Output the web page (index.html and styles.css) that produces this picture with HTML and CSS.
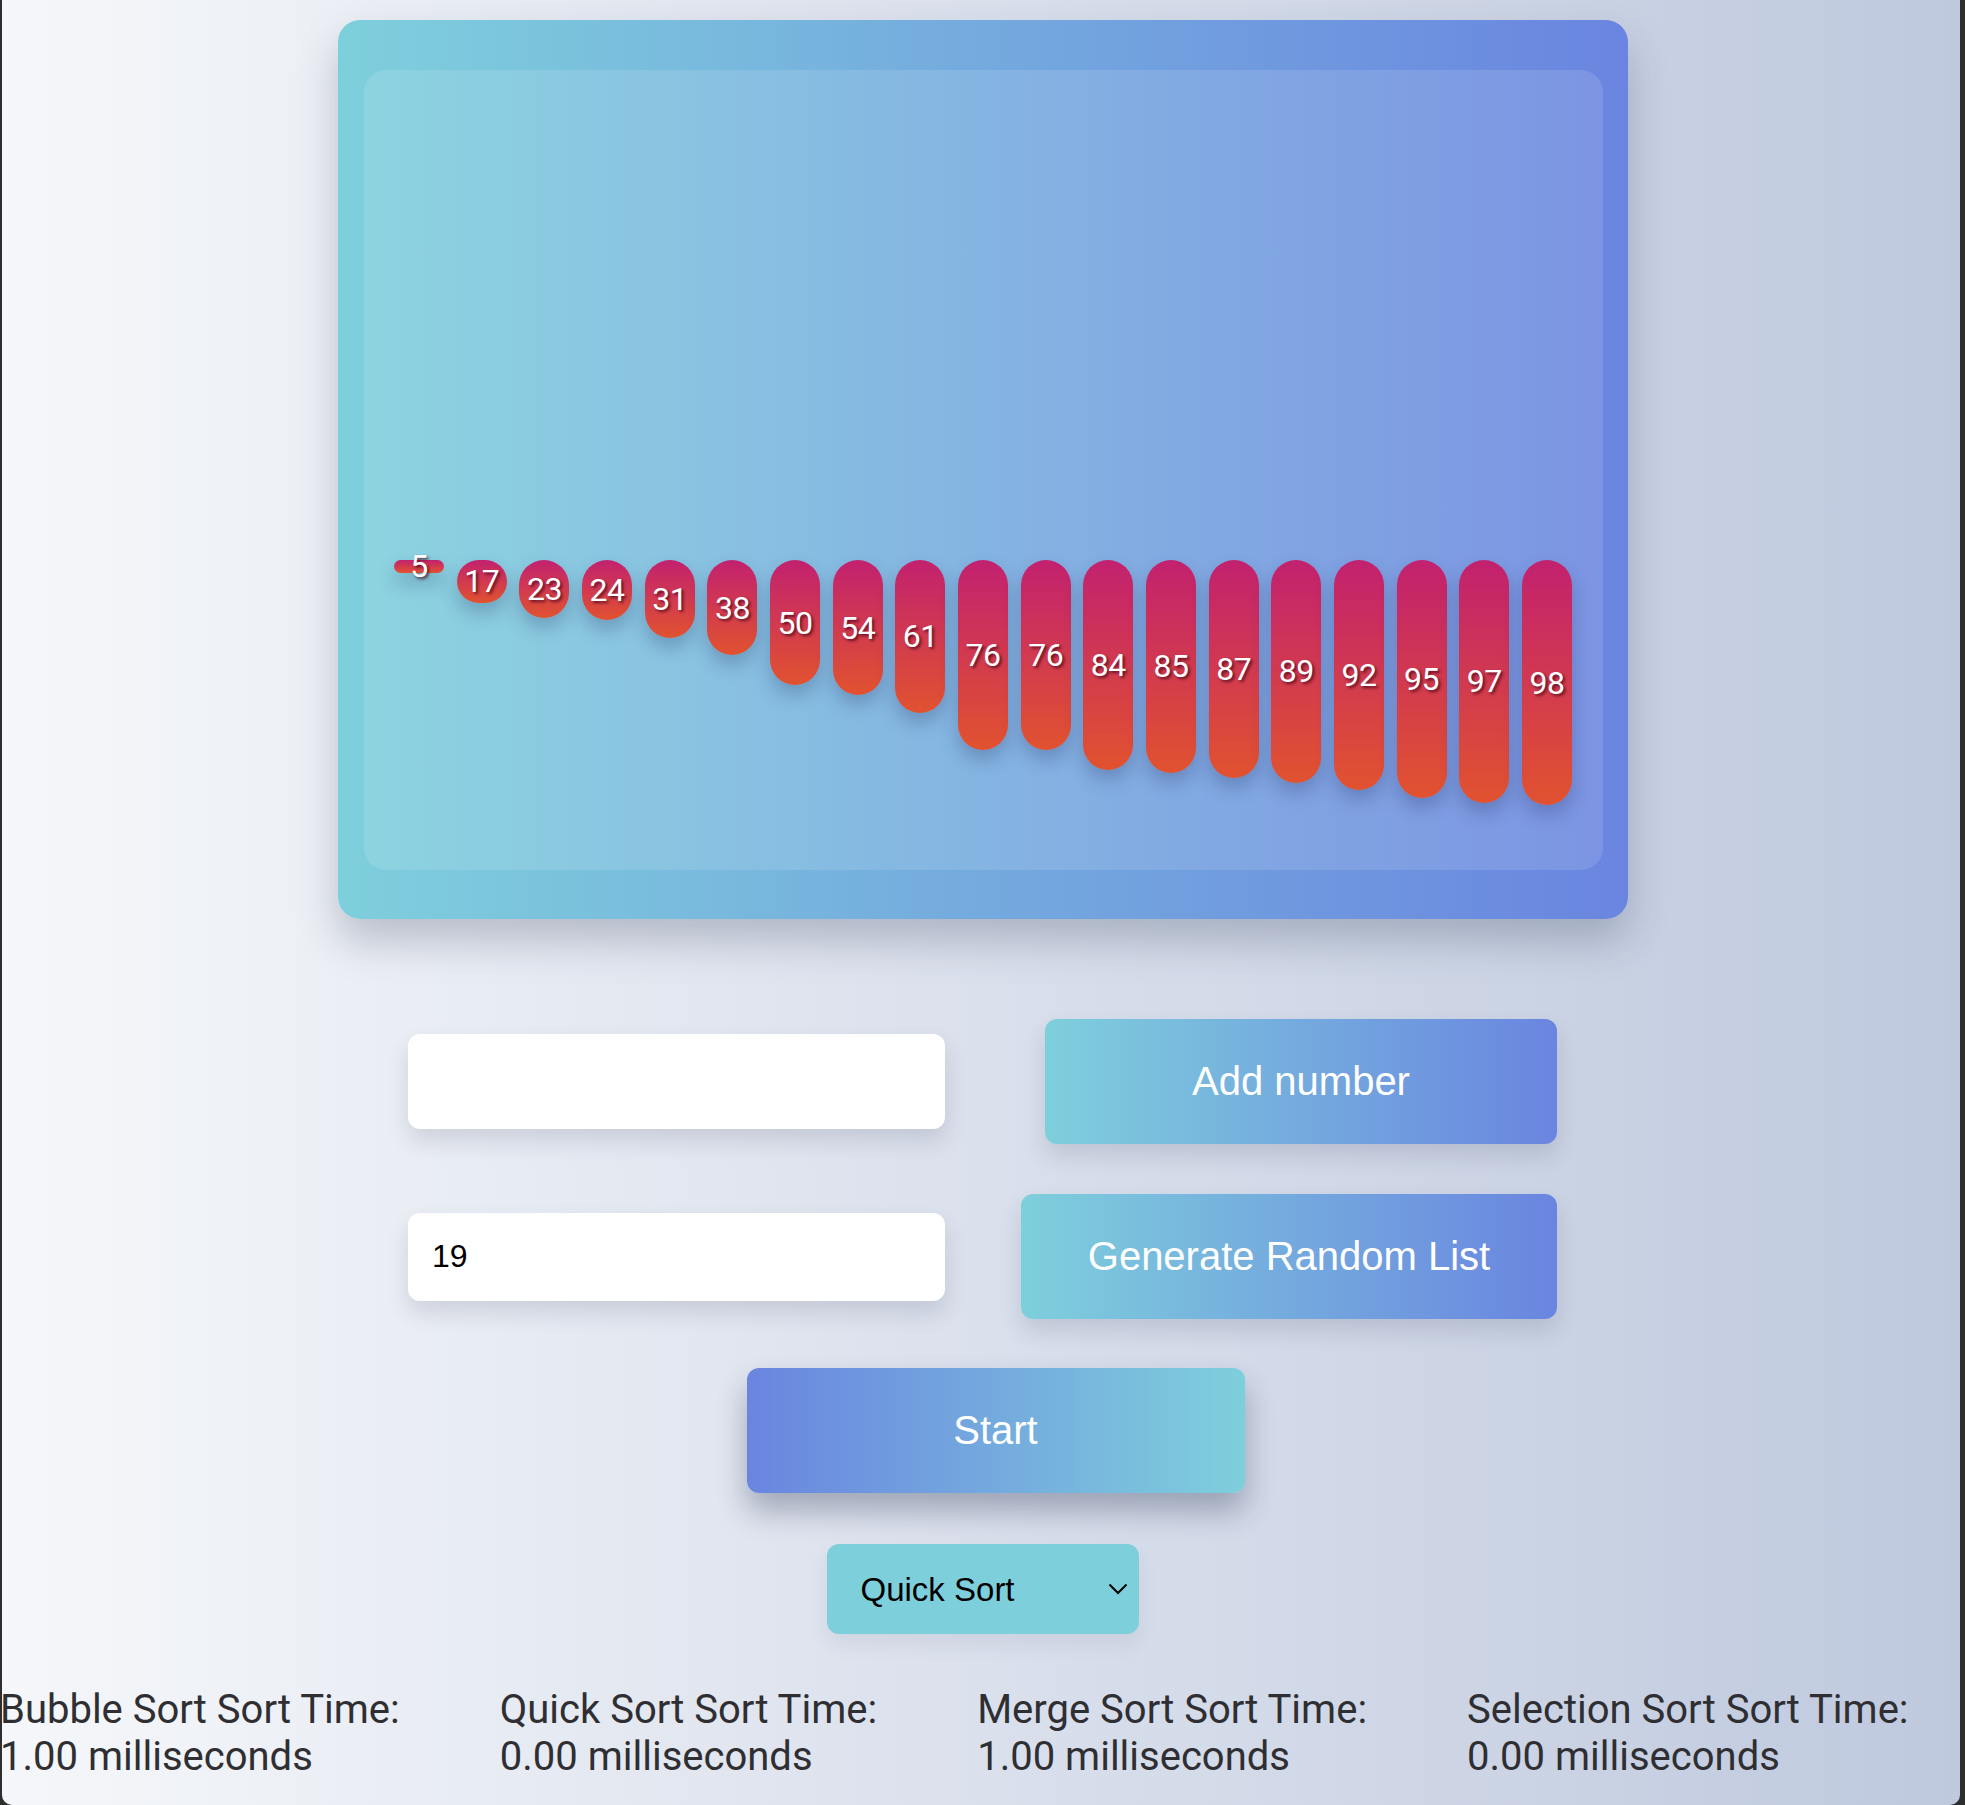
FILE: index.html
```html
<!DOCTYPE html>
<html lang="en">
<head>
<meta charset="utf-8">
<title>Sorting Visualizer</title>
<link rel="stylesheet" href="styles.css">
</head>
<body>
<div class="frame"></div>
<main class="app">
  <section class="chart">
    <div class="chart-inner">
      <div class="bars">
        <div class="bar" style="height:12.5px"><span>5</span></div>
        <div class="bar" style="height:42.5px"><span>17</span></div>
        <div class="bar" style="height:57.5px"><span>23</span></div>
        <div class="bar" style="height:60px"><span>24</span></div>
        <div class="bar" style="height:77.5px"><span>31</span></div>
        <div class="bar" style="height:95px"><span>38</span></div>
        <div class="bar" style="height:125px"><span>50</span></div>
        <div class="bar" style="height:135px"><span>54</span></div>
        <div class="bar" style="height:152.5px"><span>61</span></div>
        <div class="bar" style="height:190px"><span>76</span></div>
        <div class="bar" style="height:190px"><span>76</span></div>
        <div class="bar" style="height:210px"><span>84</span></div>
        <div class="bar" style="height:212.5px"><span>85</span></div>
        <div class="bar" style="height:217.5px"><span>87</span></div>
        <div class="bar" style="height:222.5px"><span>89</span></div>
        <div class="bar" style="height:230px"><span>92</span></div>
        <div class="bar" style="height:237.5px"><span>95</span></div>
        <div class="bar" style="height:242.5px"><span>97</span></div>
        <div class="bar" style="height:245px"><span>98</span></div>
      </div>
    </div>
  </section>

  <div class="row row-add">
    <input class="field field-add" type="text">
    <button class="btn btn-grad btn-add">Add number</button>
  </div>

  <div class="row row-gen">
    <input class="field field-gen" type="text" value="19">
    <button class="btn btn-grad btn-gen">Generate Random List</button>
  </div>

  <div class="row row-start">
    <button class="btn btn-start">Start</button>
  </div>

  <div class="row row-select">
    <div class="select-wrap">
      <select class="algo">
        <option>Bubble Sort</option>
        <option selected>Quick Sort</option>
        <option>Merge Sort</option>
        <option>Selection Sort</option>
      </select>
      <svg class="chev" width="20" height="12" viewBox="0 0 20 12"><polyline points="1.5,1.5 10,10 18.5,1.5" fill="none" stroke="#000" stroke-width="2"/></svg>
    </div>
  </div>

  <div class="stats">
    <div class="stat"><span class="stat-label">Bubble Sort Sort Time:</span><span class="stat-value">1.00 milliseconds</span></div>
    <div class="stat"><span class="stat-label">Quick Sort Sort Time:</span><span class="stat-value">0.00 milliseconds</span></div>
    <div class="stat"><span class="stat-label">Merge Sort Sort Time:</span><span class="stat-value">1.00 milliseconds</span></div>
    <div class="stat"><span class="stat-label">Selection Sort Sort Time:</span><span class="stat-value">0.00 milliseconds</span></div>
  </div>
</main>
</body>
</html>
```
FILE: styles.css
```css
* { box-sizing: border-box; }

html, body {
  margin: 0;
  padding: 0;
  height: 100%;
  overflow: hidden;
}

body {
  background: linear-gradient(to right, #f5f7fa 0%, #bfc9de 100%);
  font-family: "Liberation Sans", Arial, sans-serif;
}

.frame {
  position: fixed;
  top: 0;
  bottom: 0;
  left: 2px;
  right: 5px;
  border-radius: 0 0 10px 10px;
  box-shadow: 0 0 0 30px #2e2e2e;
  pointer-events: none;
  z-index: 10;
}

.app {
  padding-top: 20px;
  display: flex;
  flex-direction: column;
  align-items: center;
}

.chart {
  width: 1290px;
  height: 899px;
  padding: 50px 25px 49px 26px;
  border-radius: 22px;
  background: linear-gradient(to right, #7ecfdc 0%, #6a85e0 100%);
  box-shadow: 0 22px 40px rgba(40, 50, 80, 0.25);
}

.chart-inner {
  height: 100%;
  border-radius: 22px;
  background: rgba(255, 255, 255, 0.12);
  padding-top: 490px;
}

.bars {
  display: flex;
  justify-content: center;
  align-items: flex-start;
  gap: 12.67px;
}

.bar {
  width: 50px;
  flex: 0 0 50px;
  border-radius: 25px;
  background: linear-gradient(to bottom, #c2216f 0%, #e1522f 100%);
  box-shadow: 0 10px 18px rgba(30, 40, 90, 0.26);
  display: flex;
  align-items: center;
  justify-content: center;
}

.bar span {
  font-family: Roboto, "Noto Sans", sans-serif;
  font-size: 32px;
  line-height: 1;
  color: #fff;
  letter-spacing: -0.5px;
  text-shadow: 2px 2px 3px rgba(60, 0, 20, 0.75);
  white-space: nowrap;
}

.row {
  display: flex;
  justify-content: center;
  align-items: center;
}

.row-add {
  margin-top: 100px;
  gap: 100px;
}

.row-gen {
  margin-top: 50px;
  gap: 76px;
}

.row-start {
  margin-top: 49px;
}

.row-select {
  margin-top: 51px;
}

.field {
  width: 537px;
  border: none;
  outline: none;
  border-radius: 12px;
  background: #fff;
  padding: 0 24px;
  font-family: "Liberation Sans", Arial, sans-serif;
  font-size: 32px;
  color: #000;
  box-shadow: 0 12px 22px rgba(40, 50, 80, 0.14);
}

.field-add { height: 95px; }
.field-gen { height: 88px; }

.btn {
  height: 125px;
  border: none;
  border-radius: 12px;
  font-family: "Liberation Sans", Arial, sans-serif;
  font-size: 40px;
  color: #fff;
  cursor: pointer;
}

.btn-grad {
  background: linear-gradient(to right, #7ecfdc 0%, #6a85e0 100%);
  box-shadow: 0 12px 22px rgba(40, 50, 80, 0.14);
}

.btn-add { width: 512px; }
.btn-gen { width: 536px; }

.btn-start {
  width: 498px;
  margin-left: 26px;
  background: linear-gradient(to right, #6a85e0 0%, #7ecfdc 100%);
  box-shadow: 0 18px 30px rgba(30, 40, 70, 0.32);
}

.select-wrap {
  position: relative;
  width: 312px;
  height: 90px;
}

.algo {
  appearance: none;
  -webkit-appearance: none;
  width: 100%;
  height: 100%;
  border: none;
  outline: none;
  border-radius: 12px;
  background: #7ecfdc;
  padding: 0 40px 0 34px;
  font-family: "Liberation Sans", Arial, sans-serif;
  font-size: 33px;
  color: #000;
  box-shadow: 0 10px 20px rgba(40, 50, 80, 0.08);
}

.chev {
  position: absolute;
  right: 11px;
  top: 39px;
  pointer-events: none;
}

.stats {
  align-self: stretch;
  margin-top: 52px;
  display: flex;
  gap: 100px;
  font-family: Roboto, "Noto Sans", sans-serif;
  font-size: 40px;
  color: #2f2f33;
}

.stat {
  display: flex;
  flex-direction: column;
}

.stat-label,
.stat-value {
  display: block;
  white-space: nowrap;
}
```
